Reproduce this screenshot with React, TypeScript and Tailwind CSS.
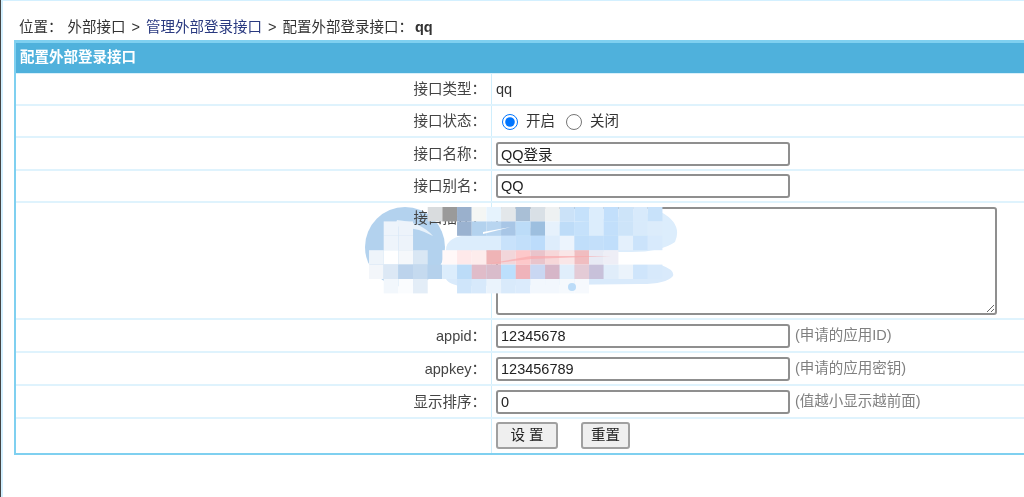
import React from "react";

const cjk = "font-['Liberation_Sans','Noto_Sans_CJK_SC',sans-serif]";

const inputCls =
  "w-[294px] h-6 bg-white border-2 border-[#8f8f8f] rounded-[3px] pl-[3px] text-[14.5px] text-[#222] outline-none";

const Row = ({
  label,
  h,
  top,
  children,
}: {
  label?: string;
  h: string;
  top?: boolean;
  children: React.ReactNode;
}) => {
  return (
    <div className={`flex ${h} border-b-2 border-[#dff3fd]`}>
      <div
        className={`w-[476px] shrink-0 flex justify-end pr-[5px] border-r border-[#cfeefc] text-[#444] ${
          top ? "relative z-[1] items-start pt-[5px]" : "items-center pt-[2px]"
        }`}
      >
        {label}
      </div>
      <div className="flex-1 flex items-center pl-1 min-w-0">{children}</div>
    </div>
  );
};

const Hint = ({ children }: { children: React.ReactNode }) => (
  <span className="ml-[5px] mt-[1px] text-[#808080]">{children}</span>
);

// [column, row, colour] of the mosaic squares, column 0 starts at x=383
const cells: [number, number, string][] = [
  [3, 0, "#d9dcde"], [4, 0, "#9a9a9a"], [5, 0, "#9ab0cc"], [6, 0, "#f4f6f4"], [7, 0, "#e6f3fd"], [8, 0, "#e3e7ea"], [9, 0, "#a9bfd6"], [10, 0, "#d9e0e6"], [11, 0, "#eef1f2"], [12, 0, "#cbe2f8"], [13, 0, "#c5e1fb"], [14, 0, "#dcedfc"], [15, 0, "#c2dffb"], [16, 0, "#cde4f9"], [17, 0, "#d8eafb"], [18, 0, "#c8e2fa"],
  [5, 1, "#9ab2d0"], [6, 1, "#b3d2ee"], [7, 1, "#b8d5f0"], [8, 1, "#a8c6e6"], [9, 1, "#bcdcf8"], [10, 1, "#9dbfdf"], [11, 1, "#e6f1fc"], [12, 1, "#bedcf8"], [13, 1, "#c5e1fb"], [14, 1, "#dcedfc"], [15, 1, "#c2dffb"], [16, 1, "#cde4f9"], [17, 1, "#d8eafb"], [18, 1, "#dcecfb"],
  [0, 1, "#eef4fb"], [1, 1, "#edf3fa"],
  [0, 2, "#eef4fb"], [1, 2, "#edf3fa"],
  [8, 2, "#c8e2fb"], [9, 2, "#c2dffa"], [10, 2, "#bcdcfb"], [11, 2, "#deedfc"], [12, 2, "#ecf4fd"], [13, 2, "#c0defa"], [14, 2, "#c3dffa"], [15, 2, "#c0defb"], [16, 2, "#e4f0fc"], [17, 2, "#cbe3fb"], [18, 2, "#d8eafc"],
  [-1, 3, "#eef4fa"], [0, 3, "#ffffff"], [1, 3, "#f5f8fb"], [2, 3, "#d9e7f4"], [4, 3, "#fff8f8"], [5, 3, "#fee9ea"], [6, 3, "#fdecec"], [7, 3, "#efb4b6"], [8, 3, "#f2d6da"], [9, 3, "#fdc8ca"], [10, 3, "#e9c4cb"], [11, 3, "#f6d7d9"], [12, 3, "#f9e6e7"], [13, 3, "#f0bdc0"], [14, 3, "#e8eaf4"], [15, 3, "#eeeef6"],
  [-1, 4, "#f3f6fa"], [0, 4, "#dce8f5"], [1, 4, "#bcd3ec"], [2, 4, "#c5daef"], [3, 4, "#b5d1ec"], [4, 4, "#dcedfc"], [5, 4, "#bcdcf8"], [6, 4, "#e0bcc9"], [7, 4, "#d9bccb"], [8, 4, "#bcdffc"], [9, 4, "#efb3ba"], [10, 4, "#c9d7f2"], [11, 4, "#d6b6c8"], [12, 4, "#e0eefb"], [13, 4, "#e4cbd6"], [14, 4, "#c8c1da"], [15, 4, "#e0edfa"], [16, 4, "#ebf3fb"], [17, 4, "#cfe5fb"], [18, 4, "#d7e9fb"],
  [0, 5, "#f2f7fc"], [1, 5, "#fafcfe"], [2, 5, "#e3edf7"], [5, 5, "#cfe5fa"], [6, 5, "#d7e9fb"], [7, 5, "#eaf3fc"], [8, 5, "#d9eafb"], [9, 5, "#dbebfc"], [10, 5, "#f2f7fd"], [11, 5, "#f2f7fd"], [12, 5, "#f5f9fd"], [13, 5, "#f6f9fd"],
];

// watermark: the disc sits under the label text, the mosaic over everything
const WatermarkDisc = () => (
  <svg className="absolute left-[360px] top-[200px]" width="100" height="100" viewBox="0 0 100 100">
    <circle cx="44" cy="47" r="40" fill="#b3d2ee" />
    <path d="M36 20 Q60 22 72 36 Q58 28 34 26Z" fill="#e8f2fb" />
  </svg>
);

const WatermarkMosaic = () => (
  <svg className="absolute z-[2] left-[360px] top-[200px]" width="340" height="120" viewBox="0 0 340 120">
    <path d="M85 50 Q85 36 110 35 L300 12 Q322 24 314 42 Q300 52 270 52 L100 52 Q85 56 85 50Z" fill="#dcedfc" />
    <path d="M84 75 Q84 65 110 65 L300 65 Q314 70 312 76 Q305 84 280 84 L100 86 Q84 84 84 75Z" fill="#d9eafb" />
    {cells.map(([col, row, fill]) => (
      <rect
        key={`${col}-${row}`}
        x={22.7 + col * 14.67}
        y={7 + row * 14.4}
        width="14.67"
        height="14.4"
        fill={fill}
      />
    ))}
    <path d="M122 32 L150 27 L122 34Z" fill="#ffffff" />
    <path d="M126 64 L170 56 L250 56 L170 59Z" fill="#f9a9ac" opacity="0.7" />
    <circle cx="211" cy="87" r="4" fill="#bcdcf8" />
  </svg>
);

export default function App() {
  return (
    <div
      className={`relative h-[497px] w-[1024px] overflow-hidden bg-white border-l border-[#444] ${cjk} text-[14.5px] blur-[0.5px]`}
    >
      <div className="h-full border-l-2 border-t border-[#d3f0ff] pl-[11px] pt-[16px]">
        <div className="h-[22px] mb-[1px] flex items-center pl-[5px] text-[#333]">
          <span>位置：</span>
          <span className="ml-[5px]">外部接口</span>
          <span className="mx-[6px]">&gt;</span>
          <span className="text-[#2a3a80]">管理外部登录接口</span>
          <span className="mx-[6px]">&gt;</span>
          <span>配置外部登录接口：</span>
          <b className="ml-[2px]">qq</b>
        </div>

        <div className="h-[415px] border-l-2 border-b-2 border-t-[3px] border-[#7fd0f0]">
          <div className="h-[31px] bg-[#4fb1dc] flex items-center pl-1 text-white font-bold border-b border-[#d8f0fb]">
            配置外部登录接口
          </div>
          <Row label="接口类型：" h="h-[32px]">
            <span className="mt-[2px] text-[#333]">qq</span>
          </Row>
          <Row label="接口状态：" h="h-[32px]">
            <label className="flex items-center ml-[6px] mt-[2px] text-[#333]">
              <input type="radio" name="status" defaultChecked className="w-[16px] h-[16px] m-0 accent-[#0075ff]" />
              <span className="ml-[8px]">开启</span>
            </label>
            <label className="flex items-center ml-[11px] mt-[2px] text-[#333]">
              <input type="radio" name="status" className="w-[16px] h-[16px] m-0" />
              <span className="ml-[8px]">关闭</span>
            </label>
          </Row>
          <Row label="接口名称：" h="h-[33px]">
            <input className={inputCls} defaultValue="QQ登录" />
          </Row>
          <Row label="接口别名：" h="h-[32px]">
            <input className={inputCls} defaultValue="QQ" />
          </Row>
          <Row label="接口描述：" h="h-[117px]" top>
            <textarea className="block w-[501px] h-[108px] bg-white border-2 border-[#8f8f8f] rounded-[3px] outline-none" />
          </Row>
          <Row label="appid：" h="h-[33px]">
            <input className={inputCls} defaultValue="12345678" />
            <Hint>(申请的应用ID)</Hint>
          </Row>
          <Row label="appkey：" h="h-[33px]">
            <input className={inputCls} defaultValue="123456789" />
            <Hint>(申请的应用密钥)</Hint>
          </Row>
          <Row label="显示排序：" h="h-[33px]">
            <input className={inputCls} defaultValue="0" />
            <Hint>(值越小显示越前面)</Hint>
          </Row>
          <div className="flex h-[34px]">
            <div className="w-[476px] shrink-0 border-r border-[#cfeefc]" />
            <div className="flex items-center pl-1 gap-[23px] pb-[1px]">
              <button className="w-[62px] h-[27px] bg-[#efefef] border-2 border-[#a0a0a0] rounded-[3px] text-[#222]">
                设 置
              </button>
              <button className="w-[49px] h-[27px] bg-[#efefef] border-2 border-[#a0a0a0] rounded-[3px] text-[#222]">
                重置
              </button>
            </div>
          </div>
        </div>
      </div>
      <WatermarkDisc />
      <WatermarkMosaic />
    </div>
  );
}
